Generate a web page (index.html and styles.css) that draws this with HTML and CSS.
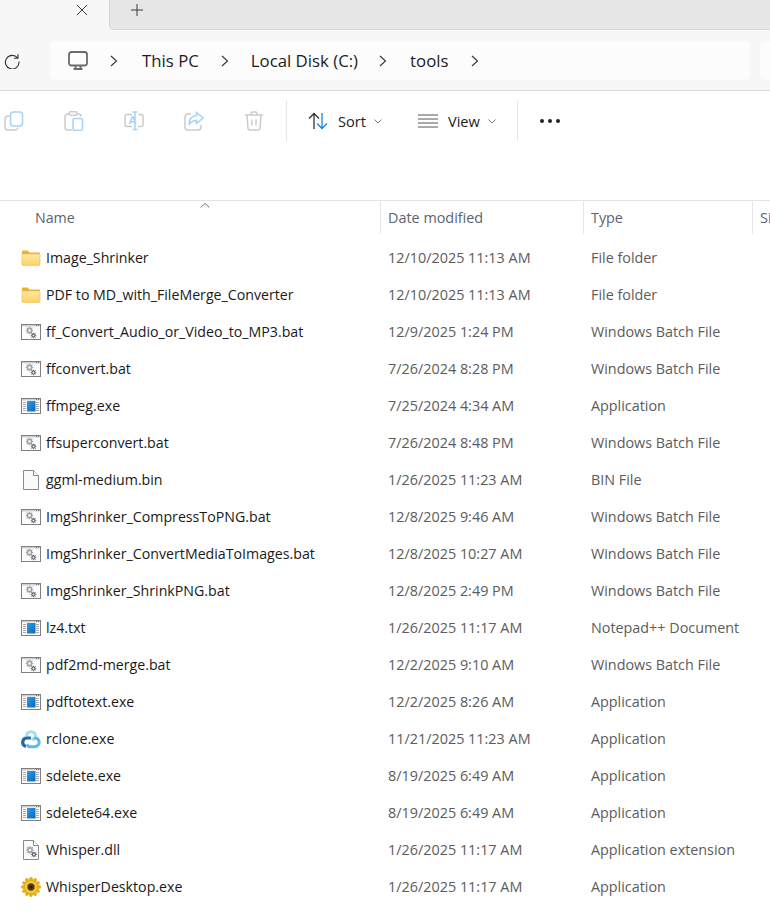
FILE: index.html
```html
<!DOCTYPE html>
<html lang="en">
<head>
    <meta charset="UTF-8">
    <meta name="viewport" content="width=device-width, initial-scale=1.0">
    <title>tools - File Explorer</title>
    <link rel="stylesheet" href="styles.css">
</head>
<body>

<svg class="defs" width="0" height="0">
    <defs>
        <linearGradient id="g-folder" x1="0" y1="0" x2="0" y2="1">
            <stop offset="0" stop-color="#ffe9a6"/>
            <stop offset="1" stop-color="#fbd164"/>
        </linearGradient>
        <linearGradient id="g-app" x1="0" y1="0" x2="1" y2="1">
            <stop offset="0" stop-color="#2f9ce8"/>
            <stop offset="1" stop-color="#0668bd"/>
        </linearGradient>
        <symbol id="i-folder" viewBox="0 0 20 16">
            <path d="M1 4V1.6C1 1 1.4.6 2 .6h4.6l2 2H18c.6 0 1 .4 1 1V4z" fill="#eeb02f"/>
            <path d="M1 4h18v10.4c0 .6-.4 1-1 1H2c-.6 0-1-.4-1-1z" fill="url(#g-folder)" stroke="#eebd52" stroke-width=".6"/>
        </symbol>
        <symbol id="i-gear" viewBox="0 0 10 10">
            <circle cx="5" cy="5" r="2.6" fill="none" stroke="currentColor" stroke-width="2"/>
            <path d="M5 0v2M5 8v2M0 5h2M8 5h2M1.5 1.5l1.4 1.4M7.1 7.1l1.4 1.4M8.5 1.5L7.1 2.9M2.9 7.1L1.5 8.5" stroke="currentColor" stroke-width="1.4"/>
        </symbol>
        <symbol id="i-bat" viewBox="0 0 20 16">
            <rect x=".5" y=".5" width="19" height="15" fill="#fdfdfd" stroke="#808080"/>
            <path d="M1 1h18v1.5H1z" fill="#cfcfcf"/>
            <path d="M15 1.5h1M17 1.5h1" stroke="#707070"/>
            <use href="#i-gear" x="4.5" y="2.5" width="8" height="8" color="#a0a4aa"/>
            <use href="#i-gear" x="9.5" y="8.5" width="6" height="6" color="#5a5e64"/>
        </symbol>
        <symbol id="i-exe" viewBox="0 0 20 16">
            <rect x=".5" y=".5" width="19" height="15" fill="#fdfdfd" stroke="#808080"/>
            <path d="M1 1h18v1.5H1z" fill="#cfcfcf"/>
            <path d="M15 1.5h1M17 1.5h1" stroke="#707070"/>
            <path d="M2 4.500h3M2 6.500h3M2 8.500h3M2 10.500h3M2 12.500h3M15 4.500h3M15 6.500h3M15 8.500h3M15 10.500h3M15 12.500h3" stroke="#a8a8a8"/>
            <rect x="6" y="3" width="8.5" height="10.5" fill="url(#g-app)"/>
        </symbol>
        <symbol id="i-file" viewBox="0 0 20 20">
            <path d="M2.500.5h10l5 5v14h-15z" fill="#fbfbfb" stroke="#8a8a8a"/>
            <path d="M12.500.5v5h5" fill="#ffffff" stroke="#8a8a8a"/>
        </symbol>
        <symbol id="i-dll" viewBox="0 0 20 20">
            <use href="#i-file" width="20" height="20"/>
            <use href="#i-gear" x="5" y="6" width="8" height="8" color="#a0a4aa"/>
            <use href="#i-gear" x="10" y="11.5" width="6" height="6" color="#5a5e64"/>
        </symbol>
        <symbol id="i-rclone" viewBox="0 0 20 20">
            <path d="M5.500 7.500C6 1 14 1 14.800 7.500L11 11.500" fill="none" stroke="#a6dcf8" stroke-width="3"/>
            <path d="M13 9.500c5-1.500 7 5 3 7.500-1.500 1-3 .8-8 .8L6 15.500" fill="none" stroke="#5db8ee" stroke-width="3"/>
            <path d="M10 9H6c-5 0-6 7-1 8.500" fill="none" stroke="#296aa5" stroke-width="3.2"/>
        </symbol>
        <symbol id="i-flower" viewBox="0 0 20 20">
            <g fill="#e3ae1a">
                <ellipse cx="10" cy="3" rx="1.9" ry="3"/>
                <ellipse cx="10" cy="3" rx="1.9" ry="3" transform="rotate(30 10 10)"/>
                <ellipse cx="10" cy="3" rx="1.9" ry="3" transform="rotate(60 10 10)"/>
                <ellipse cx="10" cy="3" rx="1.9" ry="3" transform="rotate(90 10 10)"/>
                <ellipse cx="10" cy="3" rx="1.9" ry="3" transform="rotate(120 10 10)"/>
                <ellipse cx="10" cy="3" rx="1.9" ry="3" transform="rotate(150 10 10)"/>
                <ellipse cx="10" cy="3" rx="1.9" ry="3" transform="rotate(180 10 10)"/>
                <ellipse cx="10" cy="3" rx="1.9" ry="3" transform="rotate(210 10 10)"/>
                <ellipse cx="10" cy="3" rx="1.9" ry="3" transform="rotate(240 10 10)"/>
                <ellipse cx="10" cy="3" rx="1.9" ry="3" transform="rotate(270 10 10)"/>
                <ellipse cx="10" cy="3" rx="1.9" ry="3" transform="rotate(300 10 10)"/>
                <ellipse cx="10" cy="3" rx="1.9" ry="3" transform="rotate(330 10 10)"/>
            </g>
            <circle cx="10" cy="10" r="6" fill="#f3cd3c"/>
            <circle cx="10" cy="10" r="3.7" fill="#5e3a17"/>
            <circle cx="10" cy="10" r="1.8" fill="#33200c"/>
        </symbol>
    </defs>
</svg>

<div class="tabstrip">
    <div class="tab-current">
        <svg class="tab-close" viewBox="0 0 12 12"><path d="M1 1l10 10M11 1L1 11"/></svg>
    </div>
    <div class="tab-rest">
        <svg class="tab-add" viewBox="0 0 12 12"><path d="M6 0v12M0 6h12"/></svg>
    </div>
</div>

<div class="navbar">
    <svg class="refresh" viewBox="0 0 16 16"><path d="M13.600 5A6.800 6.800 0 1 0 15 8.500M14 1.200V5.300H10"/></svg>
    <div class="address">
        <svg class="pc" viewBox="0 0 20 20"><rect x="1" y="1" width="18" height="13.5" rx="2.5"/><path d="M7.500 15v2.500M12.500 15v2.500M5.500 18h9"/></svg>
        <svg class="chev first" viewBox="0 0 8 12"><path d="M1 1l5.500 5L1 11"/></svg>
        <span class="crumb this-pc">This PC</span>
        <svg class="chev" viewBox="0 0 8 12"><path d="M1 1l5.500 5L1 11"/></svg>
        <span class="crumb disk">Local Disk (C:)</span>
        <svg class="chev" viewBox="0 0 8 12"><path d="M1 1l5.500 5L1 11"/></svg>
        <span class="crumb tools">tools</span>
        <svg class="chev" viewBox="0 0 8 12"><path d="M1 1l5.500 5L1 11"/></svg>
    </div>
    <div class="search"></div>
</div>

<div class="toolbar">
    <div class="actions">
        <svg class="tool" viewBox="0 0 20 20"><path class="g" d="M5.500 5H4a3 3 0 0 0-3 3v8a3 3 0 0 0 3 3h7a3 3 0 0 0 3-2.500"/><rect class="b" x="6.5" y="1" width="12" height="14" rx="3"/></svg>
        <svg class="tool" viewBox="0 0 20 20"><path class="g" d="M5 3H3.500A2.500 2.500 0 0 0 1 5.500v11A2.500 2.500 0 0 0 3.500 19H8M13 3h1.500A2.500 2.500 0 0 1 17 5.500"/><rect class="g" x="5" y=".8" width="8" height="3.5" rx="1.5"/><rect class="b" x="9" y="7.5" width="9.5" height="12" rx="2"/></svg>
        <svg class="tool" viewBox="0 0 20 20"><path class="g" d="M8 3.500H3a2 2 0 0 0-2 2v8a2 2 0 0 0 2 2h5M14 3.500h3a2 2 0 0 1 2 2v8a2 2 0 0 1-2 2h-3"/><path class="b" d="M8.500 1h5M11 1v17.500M8.500 18.500h5M5.500 13l2.700-7h1l2.600 7M6.500 11h4.500"/></svg>
        <svg class="tool" viewBox="0 0 20 20"><path class="g" d="M7 3H4a3 3 0 0 0-3 3v10a3 3 0 0 0 3 3h10a3 3 0 0 0 3-3v-2"/><path class="b" d="M12.500 1.500l6.500 5.500-6.500 5.500V9.500C8.500 9.500 6.500 11 5 14c0-5 2.500-9 7.500-9.500z"/></svg>
        <svg class="tool" viewBox="0 0 20 20"><path class="g" d="M1 4h18M7 4V2.500A1.500 1.500 0 0 1 8.500 1h3A1.500 1.500 0 0 1 13 2.500V4M3 4l1 13.500A2 2 0 0 0 6 19h8a2 2 0 0 0 2-1.500L17 4M8 8.500v6M12 8.500v6"/></svg>
    </div>
    <div class="tool-sep"></div>
    <div class="menu sort-menu">
        <svg class="sort-icon" viewBox="0 0 20 18"><path class="dark" d="M6 17V1.500M1 6.500l5-5 5 5"/><path class="blue" d="M14 1v15.500M9 11.500l5 5 5-5"/></svg>
        <span>Sort</span>
        <svg class="caret" viewBox="0 0 8 5"><path d="M.5.5L4 4 7.500.5"/></svg>
    </div>
    <div class="menu view-menu">
        <svg class="view-icon" viewBox="0 0 20 14"><path d="M0 1h20M0 5h20M0 9h20M0 13h20"/></svg>
        <span>View</span>
        <svg class="caret" viewBox="0 0 8 5"><path d="M.5.5L4 4 7.500.5"/></svg>
    </div>
    <div class="tool-sep"></div>
    <div class="more"><i></i><i></i><i></i></div>
</div>

<div class="listing">
    <div class="row head">
        <div class="col-name">Name</div>
        <svg class="sort-arrow" viewBox="0 0 10 5"><path d="M.5 4.500L5 .5l4.500 4"/></svg>
        <div class="col-date">Date modified</div>
        <div class="col-type">Type</div>
        <div class="col-size">Size</div>
    </div>

    <div class="row"><div class="col-name"><svg class="ico wide"><use href="#i-folder"/></svg>Image_Shrinker</div><div class="col-date">12/10/2025 11:13 AM</div><div class="col-type">File folder</div></div>
    <div class="row"><div class="col-name"><svg class="ico wide"><use href="#i-folder"/></svg>PDF to MD_with_FileMerge_Converter</div><div class="col-date">12/10/2025 11:13 AM</div><div class="col-type">File folder</div></div>
    <div class="row"><div class="col-name"><svg class="ico wide"><use href="#i-bat"/></svg>ff_Convert_Audio_or_Video_to_MP3.bat</div><div class="col-date">12/9/2025 1:24 PM</div><div class="col-type">Windows Batch File</div></div>
    <div class="row"><div class="col-name"><svg class="ico wide"><use href="#i-bat"/></svg>ffconvert.bat</div><div class="col-date">7/26/2024 8:28 PM</div><div class="col-type">Windows Batch File</div></div>
    <div class="row"><div class="col-name"><svg class="ico wide"><use href="#i-exe"/></svg>ffmpeg.exe</div><div class="col-date">7/25/2024 4:34 AM</div><div class="col-type">Application</div></div>
    <div class="row"><div class="col-name"><svg class="ico wide"><use href="#i-bat"/></svg>ffsuperconvert.bat</div><div class="col-date">7/26/2024 8:48 PM</div><div class="col-type">Windows Batch File</div></div>
    <div class="row"><div class="col-name"><svg class="ico tall"><use href="#i-file"/></svg>ggml-medium.bin</div><div class="col-date">1/26/2025 11:23 AM</div><div class="col-type">BIN File</div></div>
    <div class="row"><div class="col-name"><svg class="ico wide"><use href="#i-bat"/></svg>ImgShrinker_CompressToPNG.bat</div><div class="col-date">12/8/2025 9:46 AM</div><div class="col-type">Windows Batch File</div></div>
    <div class="row"><div class="col-name"><svg class="ico wide"><use href="#i-bat"/></svg>ImgShrinker_ConvertMediaToImages.bat</div><div class="col-date">12/8/2025 10:27 AM</div><div class="col-type">Windows Batch File</div></div>
    <div class="row"><div class="col-name"><svg class="ico wide"><use href="#i-bat"/></svg>ImgShrinker_ShrinkPNG.bat</div><div class="col-date">12/8/2025 2:49 PM</div><div class="col-type">Windows Batch File</div></div>
    <div class="row"><div class="col-name"><svg class="ico wide"><use href="#i-exe"/></svg>lz4.txt</div><div class="col-date">1/26/2025 11:17 AM</div><div class="col-type">Notepad++ Document</div></div>
    <div class="row"><div class="col-name"><svg class="ico wide"><use href="#i-bat"/></svg>pdf2md-merge.bat</div><div class="col-date">12/2/2025 9:10 AM</div><div class="col-type">Windows Batch File</div></div>
    <div class="row"><div class="col-name"><svg class="ico wide"><use href="#i-exe"/></svg>pdftotext.exe</div><div class="col-date">12/2/2025 8:26 AM</div><div class="col-type">Application</div></div>
    <div class="row"><div class="col-name"><svg class="ico tall"><use href="#i-rclone"/></svg>rclone.exe</div><div class="col-date">11/21/2025 11:23 AM</div><div class="col-type">Application</div></div>
    <div class="row"><div class="col-name"><svg class="ico wide"><use href="#i-exe"/></svg>sdelete.exe</div><div class="col-date">8/19/2025 6:49 AM</div><div class="col-type">Application</div></div>
    <div class="row"><div class="col-name"><svg class="ico wide"><use href="#i-exe"/></svg>sdelete64.exe</div><div class="col-date">8/19/2025 6:49 AM</div><div class="col-type">Application</div></div>
    <div class="row"><div class="col-name"><svg class="ico tall"><use href="#i-dll"/></svg>Whisper.dll</div><div class="col-date">1/26/2025 11:17 AM</div><div class="col-type">Application extension</div></div>
    <div class="row"><div class="col-name"><svg class="ico tall"><use href="#i-flower"/></svg>WhisperDesktop.exe</div><div class="col-date">1/26/2025 11:17 AM</div><div class="col-type">Application</div></div>
</div>

</body>
</html>
```

FILE: styles.css
```css
html, body {
    height: 100%;
}
body {
    font-family: "Open Sans", "Noto Sans", sans-serif;
    font-size: 14.2px;
    margin: 0;
    background-color: #ffffff;
    color: #1a1a1a;
    overflow: hidden;
}
.defs {
    position: absolute;
}

/* tabs */
.tabstrip {
    display: flex;
    height: 30px;
    background-color: #f7f7f7;
}
.tab-current {
    width: 109px;
    display: flex;
    justify-content: flex-end;
    padding-top: 4px;
    box-sizing: border-box;
}
.tab-close {
    width: 12px;
    height: 12px;
    margin-right: 21px;
    fill: none;
    stroke: #3a3a3a;
    stroke-width: 1;
}
.tab-rest {
    flex: 1;
    background-color: #e6e6e6;
    border-bottom: 1px solid #d6d6d6;
    border-left: 1px solid #d6d6d6;
    border-bottom-left-radius: 5px;
    padding: 4px 0 0 21px;
}
.tab-add {
    display: block;
    width: 12px;
    height: 12px;
    fill: none;
    stroke: #3a3a3a;
    stroke-width: 1;
}

/* address bar */
.navbar {
    height: 61px;
    box-sizing: border-box;
    background-color: #f7f7f7;
    border-bottom: 1px solid #d9d9d9;
    padding: 11px 0 10px 4px;
    display: flex;
    align-items: stretch;
    gap: 10px;
}
.refresh {
    width: 16px;
    height: 16px;
    align-self: center;
    margin-right: 20px;
    fill: none;
    stroke: #333333;
    stroke-width: 1.1;
}
.address {
    flex: 1;
    background-color: #fcfcfc;
    border-radius: 5px;
    display: flex;
    align-items: center;
    padding-left: 18px;
    font-size: 16.8px;
}
.search {
    width: 10px;
    background-color: #fcfcfc;
    border-radius: 5px 0 0 5px;
}
.pc {
    width: 20px;
    height: 20px;
    fill: none;
    stroke: #6a6a6a;
    stroke-width: 1.8;
}
.chev {
    width: 8px;
    height: 12px;
    fill: none;
    stroke: #333333;
    stroke-width: 1.1;
}
.chev.first {
    margin-left: 22px;
}
.crumb {
    color: #1c1c1c;
}
.this-pc {
    margin: 0 22px 0 24px;
}
.disk {
    margin: 0 21px 0 22px;
}
.tools {
    margin: 0 23px;
}

/* command bar */
.toolbar {
    height: 110px;
    box-sizing: border-box;
    padding: 10px 0 0 4px;
    display: flex;
    align-items: flex-start;
    border-bottom: 1px solid #e3e3e3;
}
.actions {
    display: flex;
    gap: 40px;
    height: 40px;
    align-items: center;
}
.tool {
    width: 20px;
    height: 20px;
    fill: none;
    stroke-width: 1.5;
}
.tool .g {
    stroke: #cbcbcb;
}
.tool .b {
    stroke: #a5d3f7;
}
.tool-sep {
    width: 1px;
    height: 40px;
    background-color: #e6e6e6;
    margin-left: 22px;
}
.menu {
    display: flex;
    align-items: center;
    height: 40px;
    color: #222222;
    font-size: 14.6px;
}
.sort-menu {
    margin-left: 21px;
}
.view-menu {
    margin-left: 36px;
}
.sort-icon {
    width: 20px;
    height: 18px;
    margin-right: 10px;
    fill: none;
    stroke-width: 1.3;
}
.sort-icon .dark {
    stroke: #333333;
}
.sort-icon .blue {
    stroke: #1684de;
}
.view-icon {
    width: 20px;
    height: 14px;
    margin-right: 10px;
    fill: none;
    stroke: #555555;
    stroke-width: 1;
}
.caret {
    width: 8px;
    height: 5px;
    margin-left: 8px;
    fill: none;
    stroke: #777777;
    stroke-width: 1;
}
.view-menu + .tool-sep {
    margin-left: 21px;
}
.more {
    display: flex;
    gap: 4px;
    height: 40px;
    align-items: center;
    margin-left: 22px;
}
.more i {
    width: 4px;
    height: 4px;
    border-radius: 50%;
    background-color: #222222;
}

/* file list */
.listing {
    padding-top: 1px;
}
.row {
    display: flex;
    align-items: center;
    height: 37px;
    white-space: nowrap;
    color: #5c5c5c;
}
.row.head {
    position: relative;
    align-items: flex-start;
    color: #5a6472;
    font-size: 14.6px;
}
.row.head > div {
    height: 32px;
    padding-bottom: 2px;
    display: flex;
    align-items: center;
    box-sizing: border-box;
}
.row.head .col-date,
.row.head .col-type,
.row.head .col-size {
    border-left: 1px solid #e6e6e6;
    padding-left: 7px;
}
.sort-arrow {
    position: absolute;
    left: 200px;
    top: 1px;
    width: 10px;
    height: 5px;
    fill: none;
    stroke: #777777;
    stroke-width: 1;
}
.col-name {
    width: 380px;
    box-sizing: border-box;
    padding-left: 21px;
    display: flex;
    align-items: center;
    color: #1a1a1a;
}
.head .col-name {
    padding-left: 35px;
    color: #5a6472;
    font-size: 14.2px;
}
.col-date {
    width: 203px;
    box-sizing: border-box;
    padding-left: 8px;
    font-size: 14.4px;
}
.col-type {
    width: 169px;
    box-sizing: border-box;
    padding-left: 8px;
    font-size: 14.35px;
}
.col-size {
    width: 18px;
    box-sizing: border-box;
    padding-left: 8px;
    overflow: hidden;
    flex: none;
}
.ico {
    flex: none;
    width: 20px;
    height: 20px;
    margin-right: 5px;
}
.ico.wide {
    height: 16px;
}
```
